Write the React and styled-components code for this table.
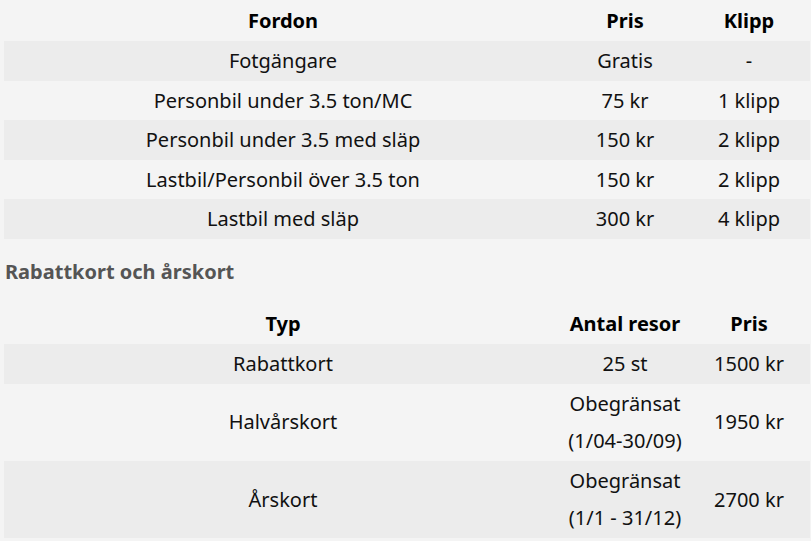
import React from "react";
import styled, { createGlobalStyle } from "styled-components";

const GlobalStyle = createGlobalStyle`
  html, body {
    margin: 0;
    padding: 0;
    background: #f4f4f4;
  }
  body {
    font-family: "Noto Sans", "Open Sans", sans-serif;
    color: #111;
  }
`;

const Page = styled.div`
  padding: 1px 0 0 4px;
  width: 806px;
`;

const Table = styled.table`
  width: 806px;
  border-collapse: collapse;
  table-layout: fixed;
  font-size: 20px;
`;

const Col = styled.col`
  width: ${(p) => p.w}px;
`;

const HeadCell = styled.th`
  font-weight: 700;
  color: #000;
  text-align: center;
  padding: 1px 0;
  line-height: 38px;
`;

const Row = styled.tr`
  &:nth-child(odd) {
    background: #ececec;
  }
`;

const Cell = styled.td`
  text-align: center;
  padding: 1px 0;
  line-height: 37.6px;
  vertical-align: middle;
`;

const SubTitle = styled.h3`
  margin: 0;
  padding: 15px 0 0 1px;
  height: 65px;
  box-sizing: border-box;
  font-size: 20px;
  font-weight: 700;
  color: #555;
  line-height: 36px;
`;

const fordon = [
  ["Fotgängare", "Gratis", "-"],
  ["Personbil under 3.5 ton/MC", "75 kr", "1 klipp"],
  ["Personbil under 3.5 med släp", "150 kr", "2 klipp"],
  ["Lastbil/Personbil över 3.5 ton", "150 kr", "2 klipp"],
  ["Lastbil med släp", "300 kr", "4 klipp"],
];

const kort = [
  ["Rabattkort", "25 st", "1500 kr"],
  ["Halvårskort", "Obegränsat (1/04-30/09)", "1950 kr"],
  ["Årskort", "Obegränsat (1/1 - 31/12)", "2700 kr"],
];

function PriceTable({ head, rows }) {
  return (
    <Table>
      <colgroup>
        <Col w={558} />
        <Col w={126} />
        <Col w={122} />
      </colgroup>
      <thead>
        <tr>
          {head.map((h) => (
            <HeadCell key={h}>{h}</HeadCell>
          ))}
        </tr>
      </thead>
      <tbody>
        {rows.map((r) => (
          <Row key={r[0]}>
            {r.map((c, i) => (
              <Cell key={i}>{c}</Cell>
            ))}
          </Row>
        ))}
      </tbody>
    </Table>
  );
}

export default function App() {
  return (
    <>
      <GlobalStyle />
      <Page>
        <PriceTable head={["Fordon", "Pris", "Klipp"]} rows={fordon} />
        <SubTitle>Rabattkort och årskort</SubTitle>
        <PriceTable head={["Typ", "Antal resor", "Pris"]} rows={kort} />
      </Page>
    </>
  );
}
